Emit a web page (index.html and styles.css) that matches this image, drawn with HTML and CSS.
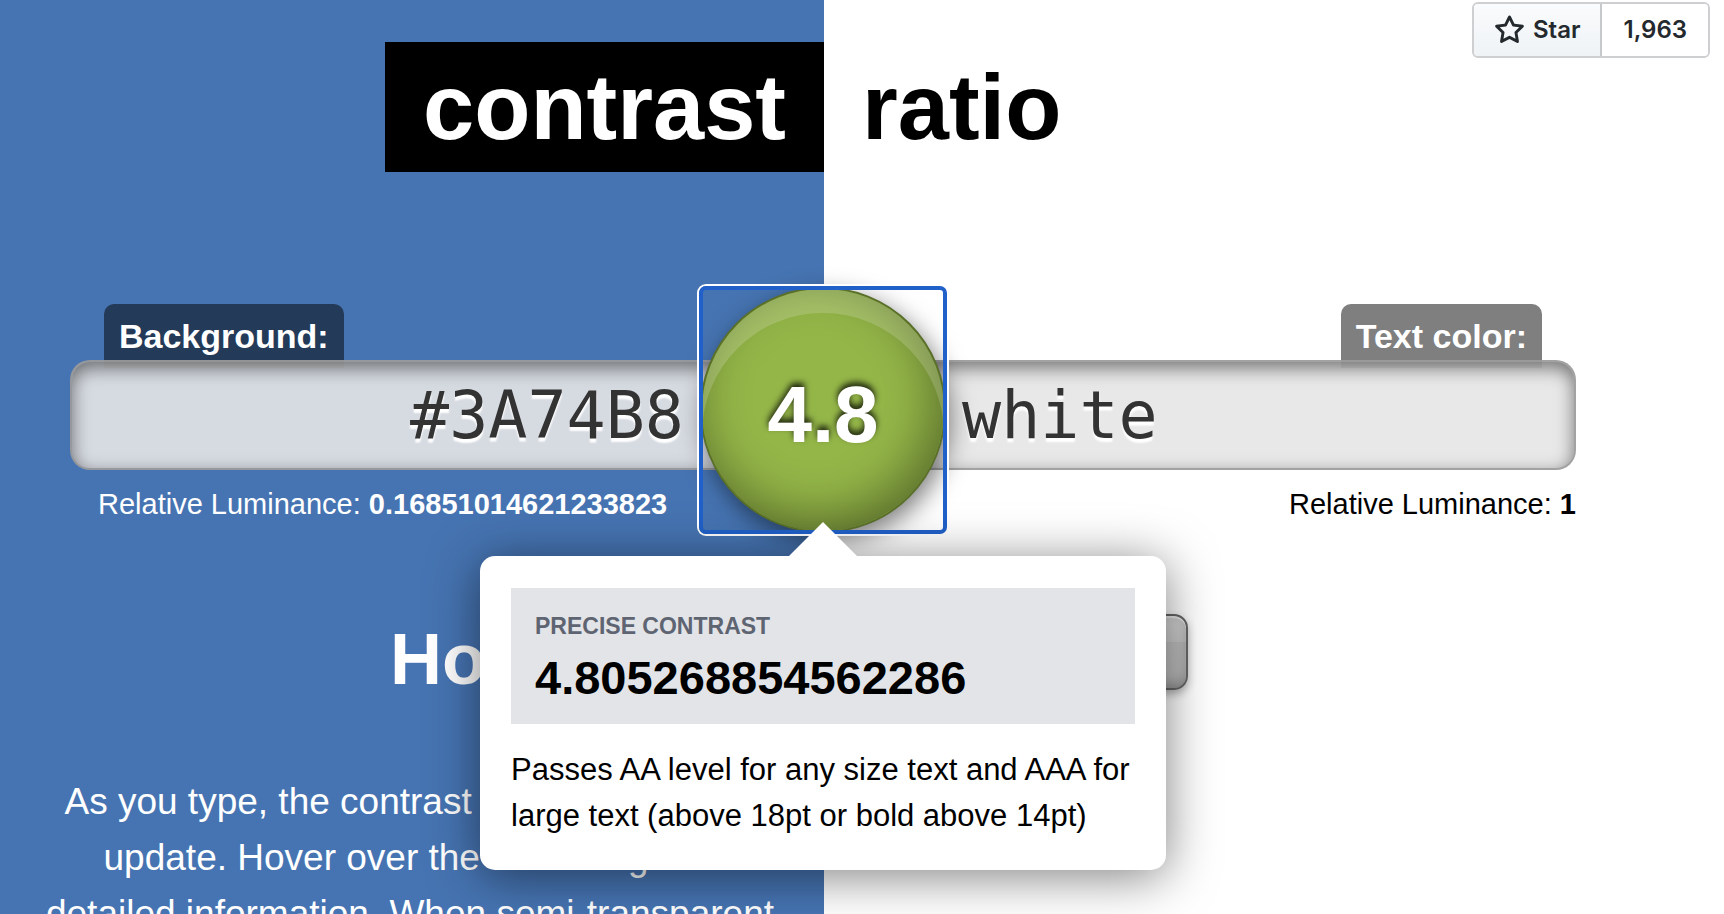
FILE: index.html
```html
<!DOCTYPE html>
<html lang="en">
<head>
<meta charset="utf-8">
<title>Contrast Ratio</title>
<link rel="stylesheet" href="styles.css">
</head>
<body>
<div class="github">
  <a class="github-star" href="#star">
    <svg class="star-icon" viewBox="0 0 16 16" aria-hidden="true"><path fill="currentColor" d="M8 .25a.75.75 0 0 1 .673.418l1.882 3.815 4.21.612a.75.75 0 0 1 .416 1.279l-3.046 2.97.719 4.192a.751.751 0 0 1-1.088.791L8 12.347l-3.766 1.98a.75.75 0 0 1-1.088-.79l.72-4.194L.818 6.374a.75.75 0 0 1 .416-1.28l4.21-.611L7.327.668A.75.75 0 0 1 8 .25Zm0 2.445L6.615 5.5a.75.75 0 0 1-.564.41l-3.097.45 2.24 2.184a.75.75 0 0 1 .216.664l-.528 3.084 2.769-1.456a.75.75 0 0 1 .698 0l2.77 1.456-.53-3.084a.75.75 0 0 1 .216-.664l2.24-2.183-3.096-.45a.75.75 0 0 1-.564-.41Z"/></svg>
    <span>Star</span>
  </a>
  <a class="github-count" href="#stargazers">1,963</a>
</div>
<main class="page">
  <h1 class="title"><span class="title-half title-dark">contrast</span><span class="title-half">ratio</span></h1>
  <section class="colors">
    <div class="labels">
      <label class="tab" for="background">Background:</label>
      <label class="tab" for="foreground">Text color:</label>
    </div>
    <div class="fields">
      <input class="field field-background" id="background" type="text" value="#3A74B8" spellcheck="false">
      <input class="field field-text" id="foreground" type="text" value="white" spellcheck="false">
      <button class="score" type="button" aria-describedby="result">4.8</button>
      <div class="result" id="result" role="tooltip">
        <div class="precise">
          <div class="precise-label">PRECISE CONTRAST</div>
          <strong class="precise-value">4.805268854562286</strong>
        </div>
        <p class="verdict">Passes AA level for any size text and AAA for large text (above 18pt or bold above 14pt)</p>
      </div>
    </div>
    <div class="luminances">
      <p class="luminance luminance-background">Relative Luminance: <strong>0.16851014621233823</strong></p>
      <p class="luminance">Relative Luminance: <strong>1</strong></p>
    </div>
  </section>
  <div class="halves">
    <section class="help">
      <h2 class="help-title">How to use</h2>
      <p class="help-text">As you type, the contrast ratio indicated will update. Hover over the circle to get more detailed information. When semi-transparent</p>
    </section>
    <div class="actions">
      <button class="swap" type="button" aria-label="Swap colors"></button>
    </div>
  </div>
</main>
</body>
</html>
```
FILE: styles.css
```css
:root {
  --background: #4674b2;
}

* {
  box-sizing: border-box;
}

html {
  height: 100%;
  overflow: hidden;
}

body {
  min-height: 100%;
  margin: 0;
  background: linear-gradient(to right, var(--background) calc(50% - 38px), #fff 0);
  color: #000;
  font-family: "Liberation Sans", Arial, sans-serif;
}

h1, h2, p {
  margin: 0;
}

.page {
  padding: 42px 76px 0 0;
}

/* GitHub button */
.github {
  position: absolute;
  top: 2px;
  right: 14px;
  display: flex;
  border: 2px solid #cdcfd1;
  border-radius: 6px;
  overflow: hidden;
  font: 600 24px/52px Inter, sans-serif;
}

.github a {
  color: #24292e;
  text-decoration: none;
}

.github-star {
  display: flex;
  align-items: center;
  gap: 8px;
  padding: 0 20px;
  border-right: 2px solid #c6c9cc;
  background: linear-gradient(#fafbfc, #eff3f6);
}

.github-count {
  padding: 0 21px;
  background: #fff;
}

.star-icon {
  width: 31px;
  height: 31px;
}

/* Title */
.title {
  display: grid;
  grid-template-columns: 1fr 1fr;
  font-size: 92px;
  line-height: 130px;
}

.title-half {
  padding: 0 38px;
}

.title-dark {
  justify-self: end;
  background: #000;
  color: #fff;
}

/* Colour fields */
.colors {
  margin-top: 132px;
  padding: 0 72px 0 70px;
}

.labels {
  display: flex;
  justify-content: space-between;
  padding: 0 34px;
}

.tab {
  padding: 12px 15px;
  border-radius: 10px 10px 0 0;
  background: rgba(0, 0, 0, .5);
  color: #fff;
  font-weight: bold;
  font-size: 34px;
  line-height: 40px;
}

.fields {
  position: relative;
  display: grid;
  grid-template-columns: 1fr 1fr;
  margin-top: -8px;
}

.field {
  min-width: 0;
  height: 110px;
  border: 2px solid rgba(0, 0, 0, .3);
  background: hsla(0, 0%, 90%, .9);
  box-shadow: inset 0 6px 18px rgba(0, 0, 0, .5);
  color: #333;
  font-family: "DejaVu Sans Mono", monospace;
  font-size: 65px;
  text-shadow: 0 4px 2px #fff;
}

.field-background {
  padding: 0 139px 0 20px;
  border-right: 0;
  border-radius: 20px 0 0 20px;
  text-align: right;
}

.field-text {
  padding: 0 20px 0 139px;
  border-left: 0;
  border-radius: 0 20px 20px 0;
}

.score {
  position: absolute;
  top: 50%;
  left: 50%;
  width: 246px;
  height: 246px;
  margin: -128px 0 0 -123px;
  padding: 10px 0 0;
  border: 2px solid #5a702a;
  border-radius: 50%;
  background: #94b648;
  box-shadow:
    inset 0 24px 0 rgba(255, 255, 255, .17),
    inset -8px -12px 50px rgba(0, 0, 0, .4),
    4px 8px 24px rgba(0, 0, 0, .5);
  color: #fff;
  font: bold 80px "Liberation Sans", Arial, sans-serif;
  text-shadow: 0 -4px 6px rgba(0, 0, 0, .8);
}

.score::after {
  content: "";
  position: absolute;
  inset: -3px;
  border: 4px solid #2060c8;
  border-radius: 7px;
  box-shadow: 0 0 0 2px #fff;
}

/* Result popover */
.result {
  position: absolute;
  top: 196px;
  left: 50%;
  z-index: 1;
  width: 686px;
  padding: 32px 31px 31px;
  border-radius: 15px;
  background: #fff;
  box-shadow: 0 6px 50px rgba(0, 0, 0, .5);
  transform: translateX(-50%);
}

.result::before {
  content: "";
  position: absolute;
  bottom: 100%;
  left: 50%;
  margin-left: -34px;
  border: 34px solid transparent;
  border-top: 0;
  border-bottom-color: #fff;
}

.precise {
  padding: 23px 24px 19px;
  background: #e3e4e8;
}

.precise-label {
  color: #5e6471;
  font-weight: bold;
  font-size: 23px;
  line-height: 30px;
}

.precise-value {
  display: block;
  margin-top: 10px;
  font-size: 47px;
  line-height: 54px;
}

.verdict {
  margin-top: 23px;
  font-size: 31px;
  line-height: 46px;
}

/* Luminance captions */
.luminances {
  display: flex;
  justify-content: space-between;
  padding: 14px 0 0 28px;
}

.luminance {
  font-size: 29px;
  line-height: 40px;
}

.luminance-background {
  color: #fff;
}

/* Lower halves */
.halves {
  display: grid;
  grid-template-columns: 1fr 1fr;
}

.help {
  padding: 95px 50px 0 24px;
  color: #fff;
  text-align: right;
}

.help-title {
  font-size: 72px;
  line-height: 80px;
}

.help-text {
  margin-top: 75px;
  font-size: 37px;
  line-height: 56px;
}

.actions {
  padding: 90px 0 0 40px;
}

.swap {
  width: 324px;
  height: 76px;
  border: 2px solid #666;
  border-radius: 14px;
  background: linear-gradient(#dadada, #cecece 36%, #c4c4c4 36%, #bcbcbc);
  box-shadow:
    inset 0 2px 1px rgba(255, 255, 255, .6),
    inset 0 -4px 12px rgba(0, 0, 0, .25),
    0 4px 8px rgba(0, 0, 0, .3);
}
```
